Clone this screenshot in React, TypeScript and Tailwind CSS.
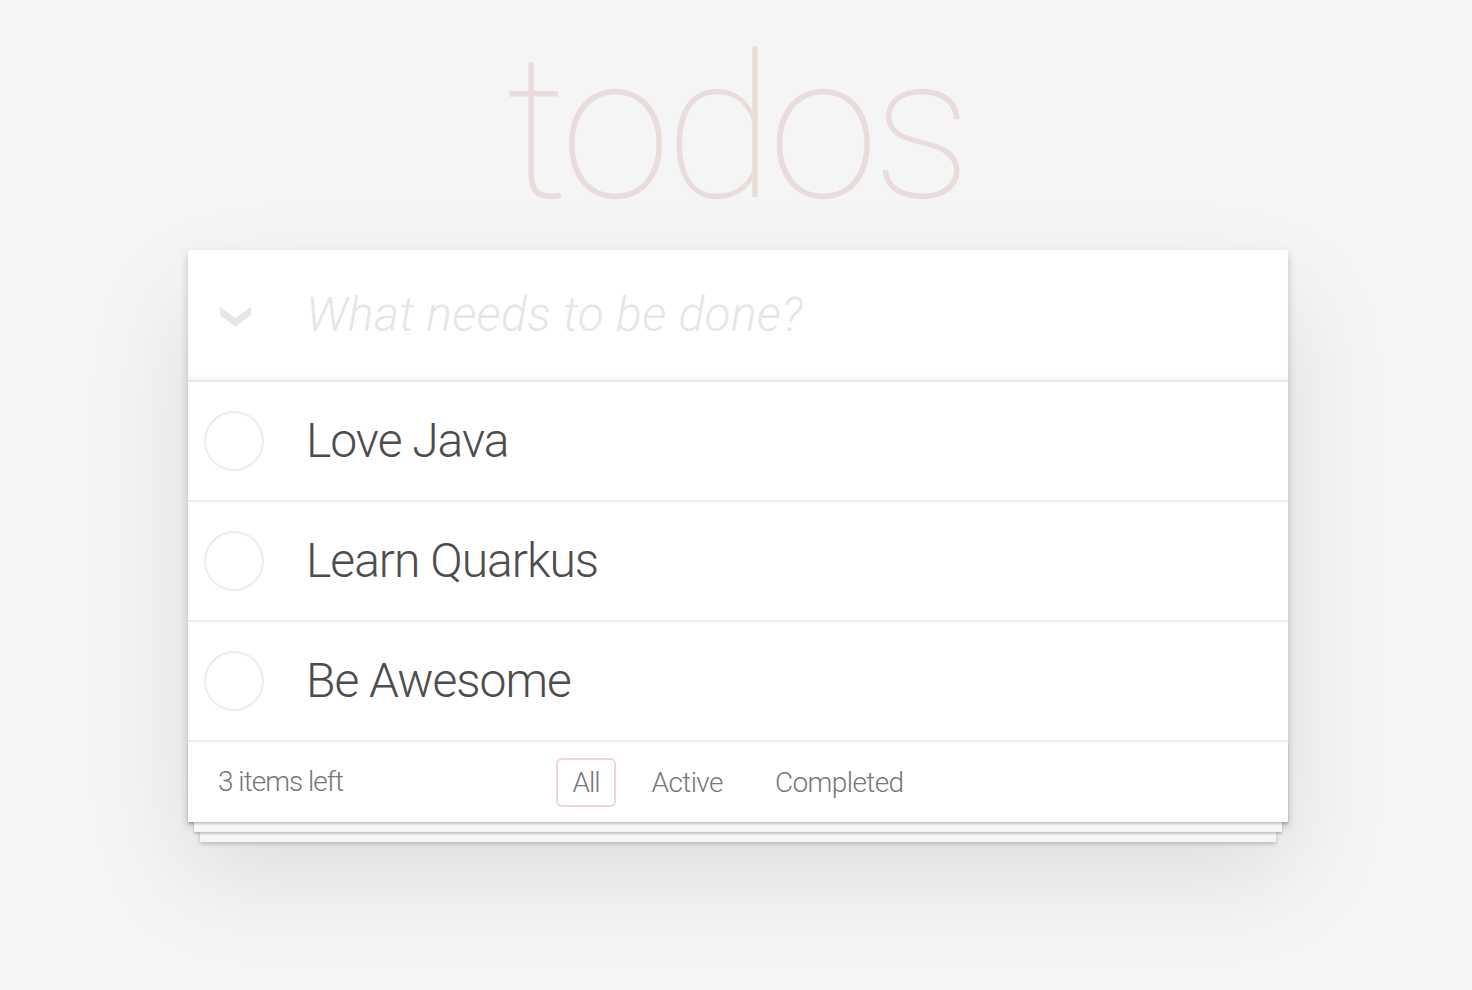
const todos = ['Love Java', 'Learn Quarkus', 'Be Awesome'];
const filters = ['All', 'Active', 'Completed'];

const App = () => {
  return (
    <div className="min-h-screen bg-[#f5f5f5] font-['Roboto',sans-serif] font-light text-[#4d4d4d]">
      <section className="ml-[188px] w-[1100px] pb-20">
        <h1 className="mb-[21px] box-content h-[200px] pt-[29px] pr-[5px] text-center text-[200px] leading-none font-thin tracking-[-6px] text-[#eadcdb]">
          todos
        </h1>

        <div className="relative bg-white shadow-[0_4px_8px_0_rgba(0,0,0,0.2),0_50px_100px_0_rgba(0,0,0,0.1)]">
          <header className="flex h-[130px] items-center shadow-[inset_0_-4px_2px_rgba(0,0,0,0.03)]">
            <div className="flex w-[118px] justify-start pl-[32px]">
              <svg width="32" height="21" viewBox="0 0 32 21" className="mt-[5px]">
                <polygon points="0,0 15.5,11 31,0 31,8 15.5,20 0,8" fill="#e6e6e6" />
              </svg>
            </div>
            <span className="text-[48px] italic font-light tracking-[0.3px] text-[#e6e6e6]">What needs to be done?</span>
          </header>

          <ul className="border-t-2 border-[#e6e6e6]">
            {todos.map((todo) => (
              <li key={todo} className="flex h-[120px] items-center border-b-2 border-[#ededed]">
                <div className="flex w-[118px] justify-start pl-[16px]">
                  <span className="block h-[60px] w-[60px] rounded-full border-2 border-[#ededed]" />
                </div>
                <span className="text-[48px] tracking-[-1px] text-[#4d4d4d]">{todo}</span>
              </li>
            ))}
          </ul>

          <footer className="grid h-[80px] grid-cols-[1fr_auto_1fr] items-center px-[30px] text-[28px] text-[#777] shadow-[0_2px_2px_rgba(0,0,0,0.2),0_16px_0_-6px_#f6f6f6,0_18px_2px_-6px_rgba(0,0,0,0.2),0_32px_0_-12px_#f6f6f6,0_34px_4px_-12px_rgba(0,0,0,0.2)]">
            <span className="tracking-[-1px]">3 items left</span>
            <ul className="flex items-center gap-5">
              {filters.map((f) => (
                <li key={f}>
                  <span
                    className={
                      f === 'All'
                        ? 'block rounded-[6px] border-2 border-[#efd5d5] px-[14px] py-[6px] leading-[33px] tracking-[-1px]'
                        : 'block rounded-[6px] border-2 border-transparent px-[14px] py-[6px] leading-[33px] tracking-[-0.6px]'
                    }
                  >
                    {f}
                  </span>
                </li>
              ))}
            </ul>
            <span />
          </footer>
        </div>
      </section>
    </div>
  );
};

export default App;
